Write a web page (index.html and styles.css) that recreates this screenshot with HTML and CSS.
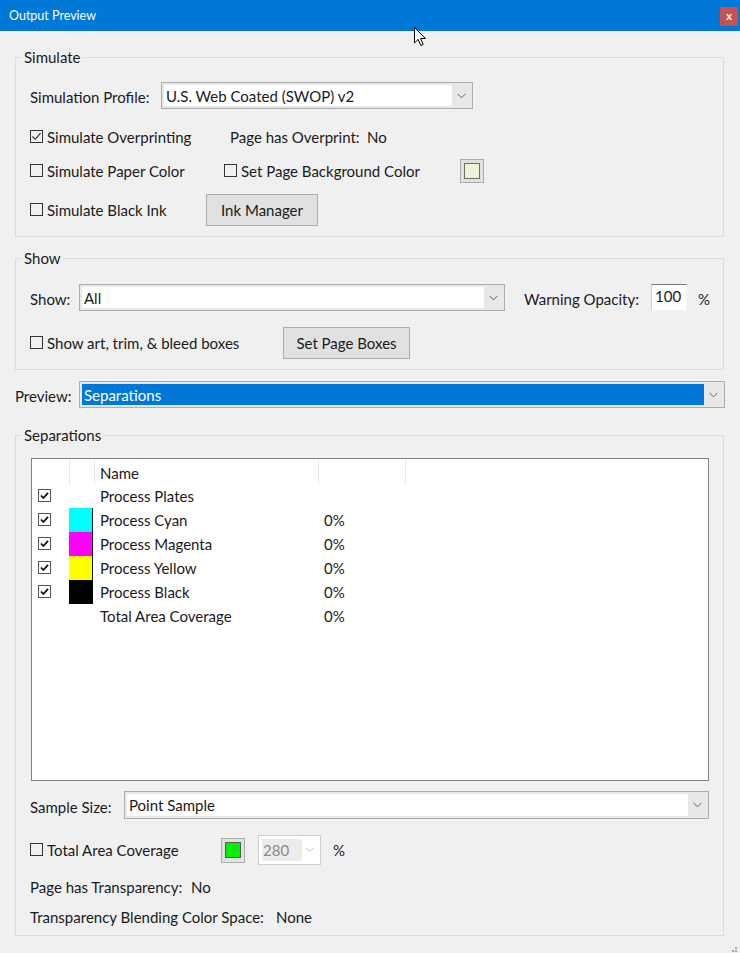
FILE: index.html
```html
<!DOCTYPE html>
<html>
<head>
<meta charset="utf-8">
<title>Output Preview</title>
<link rel="stylesheet" href="styles.css">
</head>
<body>
<div class="window">
  <div class="titlebar">
    <span class="title">Output Preview</span>
    <span class="close">x</span>
  </div>
  <div class="content">
    <fieldset class="group g-simulate">
      <legend>Simulate</legend>
      <div class="row r-profile">
        <span class="lbl w131">Simulation Profile:</span>
        <div class="select w-profile">
          <div class="sel-field">U.S. Web Coated (SWOP) v2</div>
          <div class="sel-arrow"><svg width="9" height="6" viewBox="0 0 9 6"><path d="M0.5 0.8 L4.5 4.8 L8.5 0.8" fill="none" stroke="#606060" stroke-width="1"/></svg></div>
        </div>
      </div>
      <div class="row r-over">
        <label class="chk w200"><span class="box"><svg width="11" height="11" viewBox="0 0 11 11"><path d="M1.5 5.5 L4.2 8.3 L9.5 2.2" fill="none" stroke="#222" stroke-width="1.1"/></svg></span>Simulate Overprinting</label>
        <span class="lbl w137">Page has Overprint:</span>
        <span class="val">No</span>
      </div>
      <div class="row r-paper">
        <label class="chk w194"><span class="box"></span>Simulate Paper Color</label>
        <label class="chk w236"><span class="box"></span>Set Page Background Color</label>
        <span class="swatch"><span class="swatch-in paper"></span></span>
      </div>
      <div class="row r-black">
        <label class="chk w176"><span class="box"></span>Simulate Black Ink</label>
        <button class="btn w112">Ink Manager</button>
      </div>
    </fieldset>

    <fieldset class="group g-show">
      <legend>Show</legend>
      <div class="row r-showsel">
        <span class="lbl w49">Show:</span>
        <div class="select w-show">
          <div class="sel-field">All</div>
          <div class="sel-arrow"><svg width="9" height="6" viewBox="0 0 9 6"><path d="M0.5 0.8 L4.5 4.8 L8.5 0.8" fill="none" stroke="#606060" stroke-width="1"/></svg></div>
        </div>
        <span class="lbl w127 ml19">Warning Opacity:</span>
        <span class="numbox">100</span>
        <span class="val ml11 lower">%</span>
      </div>
      <div class="row r-boxes">
        <label class="chk w253"><span class="box"></span>Show art, trim, &amp; bleed boxes</label>
        <button class="btn w127">Set Page Boxes</button>
      </div>
    </fieldset>

    <div class="row r-preview">
      <span class="lbl w64">Preview:</span>
      <div class="select w-preview">
        <div class="sel-field selected">Separations</div>
        <div class="sel-arrow"><svg width="9" height="6" viewBox="0 0 9 6"><path d="M0.5 0.8 L4.5 4.8 L8.5 0.8" fill="none" stroke="#606060" stroke-width="1"/></svg></div>
      </div>
    </div>

    <fieldset class="group g-sep">
      <legend>Separations</legend>
      <div class="list">
        <div class="lrow lhead">
          <span class="c-chk"></span>
          <span class="c-sw hdiv"></span>
          <span class="c-name hdiv">Name</span>
          <span class="c-pct hdiv"></span>
          <span class="c-rest hdiv"></span>
        </div>
        <div class="lrow">
          <span class="c-chk"><span class="lbox"><svg width="11" height="11" viewBox="0 0 11 11"><path d="M2 5.5 L4.4 8 L9 2.8" fill="none" stroke="#111" stroke-width="1.8"/></svg></span></span>
          <span class="c-sw"></span>
          <span class="c-name">Process Plates</span>
          <span class="c-pct"></span>
        </div>
        <div class="lrow">
          <span class="c-chk"><span class="lbox"><svg width="11" height="11" viewBox="0 0 11 11"><path d="M2 5.5 L4.4 8 L9 2.8" fill="none" stroke="#111" stroke-width="1.8"/></svg></span></span>
          <span class="c-sw"><span class="ink cyan"></span></span>
          <span class="c-name">Process Cyan</span>
          <span class="c-pct">0%</span>
        </div>
        <div class="lrow">
          <span class="c-chk"><span class="lbox"><svg width="11" height="11" viewBox="0 0 11 11"><path d="M2 5.5 L4.4 8 L9 2.8" fill="none" stroke="#111" stroke-width="1.8"/></svg></span></span>
          <span class="c-sw"><span class="ink magenta"></span></span>
          <span class="c-name">Process Magenta</span>
          <span class="c-pct">0%</span>
        </div>
        <div class="lrow">
          <span class="c-chk"><span class="lbox"><svg width="11" height="11" viewBox="0 0 11 11"><path d="M2 5.5 L4.4 8 L9 2.8" fill="none" stroke="#111" stroke-width="1.8"/></svg></span></span>
          <span class="c-sw"><span class="ink yellow"></span></span>
          <span class="c-name">Process Yellow</span>
          <span class="c-pct">0%</span>
        </div>
        <div class="lrow">
          <span class="c-chk"><span class="lbox"><svg width="11" height="11" viewBox="0 0 11 11"><path d="M2 5.5 L4.4 8 L9 2.8" fill="none" stroke="#111" stroke-width="1.8"/></svg></span></span>
          <span class="c-sw"><span class="ink black"></span></span>
          <span class="c-name">Process Black</span>
          <span class="c-pct">0%</span>
        </div>
        <div class="lrow">
          <span class="c-chk"></span>
          <span class="c-sw"></span>
          <span class="c-name">Total Area Coverage</span>
          <span class="c-pct">0%</span>
        </div>
      </div>
      <div class="row r-sample">
        <span class="lbl w94">Sample Size:</span>
        <div class="select w-sample">
          <div class="sel-field">Point Sample</div>
          <div class="sel-arrow"><svg width="9" height="6" viewBox="0 0 9 6"><path d="M0.5 0.8 L4.5 4.8 L8.5 0.8" fill="none" stroke="#606060" stroke-width="1"/></svg></div>
        </div>
      </div>
      <div class="row r-tac">
        <label class="chk w191"><span class="box"></span>Total Area Coverage</label>
        <span class="swatch sw-green"><span class="swatch-in green"></span></span>
        <div class="combo">
          <span class="combo-field">280</span>
          <span class="combo-arrow"><svg width="9" height="6" viewBox="0 0 9 6"><path d="M0.5 0.8 L4.5 4.8 L8.5 0.8" fill="none" stroke="#c0c0c0" stroke-width="1"/></svg></span>
        </div>
        <span class="val ml12">%</span>
      </div>
      <div class="row r-info1">
        <span class="lbl w161">Page has Transparency:</span>
        <span class="val">No</span>
      </div>
      <div class="row r-info2">
        <span class="lbl w246">Transparency Blending Color Space:</span>
        <span class="val">None</span>
      </div>
    </fieldset>
  </div>
  <div class="grip">
    <svg width="10" height="10" viewBox="0 0 10 10" fill="#a8a8a8">
      <rect x="7" y="1" width="2" height="2"/>
      <rect x="4" y="4" width="2" height="2"/><rect x="7" y="4" width="2" height="2"/>
      <rect x="1" y="7" width="2" height="2"/><rect x="4" y="7" width="2" height="2"/><rect x="7" y="7" width="2" height="2"/>
    </svg>
  </div>
  <div class="cursor">
    <svg width="13" height="20" viewBox="0 0 13 20">
      <path d="M0.5 0.5 L0.5 16 L4.2 12.4 L6.8 18.5 L9.2 17.5 L6.6 11.5 L11.5 11.5 Z" fill="#fff" stroke="#000" stroke-width="1" stroke-linejoin="miter"/>
    </svg>
  </div>
</div>
</body>
</html>
```

FILE: styles.css
```css
* { box-sizing: border-box; }
html, body { margin: 0; padding: 0; }
body {
  background: #f0f0f0;
  font-family: "Segoe UI", Lato, "Noto Sans", sans-serif;
  font-size: 15px;
  color: #1a1a1a;
}
.window {
  position: relative;
  width: 740px;
  height: 953px;
  background: #f0f0f0;
  overflow: hidden;
}
.titlebar {
  height: 31px;
  background: #0078d7;
  display: flex;
  align-items: center;
  justify-content: space-between;
  padding: 0 2px 0 9px;
}
.title {
  color: #fff;
  font-size: 12.5px;
}
.close {
  width: 18px;
  height: 19px;
  background: #c75050;
  color: #fff;
  font-size: 11px;
  font-weight: bold;
  display: flex;
  align-items: center;
  justify-content: center;
  line-height: 1;
  padding-bottom: 2px;
  margin-top: 2px;
}
.content {
  padding: 0 15px 0 15px;
}
.group {
  margin: 0 1px 0 0;
  border: 1px solid #dcdcdc;
  padding: 0 14px 0 14px;
  min-width: 0;
}
.group legend {
  padding: 0 2px;
  margin-left: -8px;
  line-height: 20px;
  height: 20px;
}
.g-simulate { margin-top: 16px; padding-top: 15px; padding-bottom: 10px; }
.g-show { margin-top: 11px; padding-top: 16px; padding-bottom: 10px; }
.g-sep { margin-top: 17px; padding-top: 13px; padding-bottom: 8px; padding-left: 15px; padding-right: 14px; }
.g-sep legend { margin-left: -9px; }

.row { display: flex; align-items: center; }
.r-profile { height: 27px; }
.r-over { height: 20px; margin-top: 18px; }
.r-paper { height: 24px; margin-top: 12px; }
.r-black { height: 32px; margin-top: 11px; }
.r-showsel { height: 27px; }
.r-boxes { height: 32px; margin-top: 16px; }
.r-preview { height: 27px; margin-top: 11px; }
.r-sample { height: 28px; margin-top: 10px; }
.r-tac { height: 30px; margin-top: 16px; }
.r-info1 { height: 20px; margin-top: 12px; }
.r-info2 { height: 20px; margin-top: 10px; }
.r-sample, .r-tac, .r-info1, .r-info2 { margin-left: -1px; }
.r-profile .lbl, .r-showsel .lbl, .r-preview .lbl, .r-sample .lbl { padding-top: 3px; }
.lower { padding-top: 3px; }

.lbl, .val { white-space: nowrap; }
.w49 { width: 49px; flex: none; }
.w64 { width: 64px; flex: none; }
.w94 { width: 94px; flex: none; }
.w127 { width: 127px; flex: none; }
.w131 { width: 131px; flex: none; }
.w137 { width: 137px; flex: none; }
.w161 { width: 161px; flex: none; }
.w176 { width: 176px; flex: none; }
.w191 { width: 191px; flex: none; }
.w194 { width: 194px; flex: none; }
.w200 { width: 200px; flex: none; }
.w236 { width: 236px; flex: none; }
.w246 { width: 246px; flex: none; }
.w253 { width: 253px; flex: none; }
.ml11 { margin-left: 11px; }
.ml12 { margin-left: 12px; }
.ml19 { margin-left: 19px; }

.chk { display: flex; align-items: center; white-space: nowrap; }
.box {
  width: 13px;
  height: 13px;
  border: 1px solid #333;
  margin-right: 4px;
  flex: none;
  display: flex;
  align-items: center;
  justify-content: center;
  margin-top: -1px;
}

.select {
  height: 27px;
  border: 1px solid #adadad;
  background: #e8e8e8;
  display: flex;
  padding: 2px;
  flex: none;
}
.w-profile { width: 312px; }
.w-show { width: 426px; }
.w-preview { width: 646px; }
.w-sample { flex: 1; height: 28px; }
.sel-field {
  flex: 1;
  background: #fff;
  padding-left: 2px;
  display: flex;
  align-items: center;
  white-space: nowrap;
  line-height: 1;
  padding-top: 1px;
}
.sel-field.selected { background: #0078d7; color: #fff; }
.sel-arrow {
  width: 18px;
  display: flex;
  align-items: center;
  justify-content: center;
  flex: none;
}

.btn {
  height: 32px;
  background: #e1e1e1;
  border: 1px solid #adadad;
  font: inherit;
  color: #1a1a1a;
  padding: 0;
  flex: none;
}
.w112 { width: 112px; }
.w127.btn { width: 127px; }

.swatch {
  width: 24px;
  height: 24px;
  background: #e1e1e1;
  border: 1px solid #adadad;
  display: flex;
  align-items: center;
  justify-content: center;
  flex: none;
}
.swatch-in { width: 16px; height: 16px; border: 1px solid #6e6e6e; }
.paper { background: #eef2d8; }
.green { background: #00ee00; border-color: #5a5a5a; }
.sw-green { height: 25px; }

.numbox {
  width: 36px;
  height: 27px;
  background: #fff;
  border-top: 1px solid #7a7a7a;
  border-left: 1px solid #d0d0d0;
  border-right: 1px solid #f4f4f4;
  border-bottom: 1px solid #f4f4f4;
  padding-left: 3px;
  display: flex;
  align-items: center;
  line-height: 1;
  padding-bottom: 2px;
  flex: none;
}

.list {
  height: 323px;
  border: 1px solid #828282;
  background: #fff;
}
.lrow { display: flex; height: 24px; align-items: center; }
.lhead { height: 25px; align-items: stretch; }
.lhead span { display: flex; align-items: center; }
.hdiv { border-left: 1px solid #e5e5e5; margin-top: 1px; margin-bottom: 1px; }
.c-chk { width: 37px; flex: none; display: flex; justify-content: flex-start; padding-left: 6px; align-items: center; height: 100%; }
.c-sw { width: 25px; flex: none; height: 100%; display: flex; }
.c-name { width: 224px; flex: none; padding-left: 6px; white-space: nowrap; }
.c-pct { width: 87px; flex: none; padding-left: 6px; }
.c-rest { width: 0; }
.lhead .c-name { padding-left: 5px; padding-top: 2px; }
.lbox {
  width: 13px;
  height: 13px;
  border: 1px solid #555;
  display: flex;
  align-items: center;
  justify-content: center;
  margin-top: -2px;
}
.ink { width: 24px; height: 100%; }
.cyan { background: #00ffff; border-right: 1px solid #111; }
.magenta { background: #ff00ff; border-right: 1px solid #111; }
.yellow { background: #ffff00; border-right: 1px solid #111; }
.black { background: #000; }

.combo {
  margin-left: 13px;
  width: 63px;
  height: 30px;
  border: 1px solid #cfcfcf;
  background: #fff;
  display: flex;
  padding: 3px;
  flex: none;
}
.combo-field {
  width: 40px;
  background: #ececec;
  color: #8a8a8a;
  display: flex;
  align-items: center;
  padding-left: 1px;
  line-height: 1;
}
.combo-arrow { flex: 1; display: flex; align-items: center; justify-content: center; }

.grip { position: absolute; right: 2px; bottom: 2px; width: 10px; height: 10px; }
.cursor { position: absolute; left: 414px; top: 27px; pointer-events: none; }
```
